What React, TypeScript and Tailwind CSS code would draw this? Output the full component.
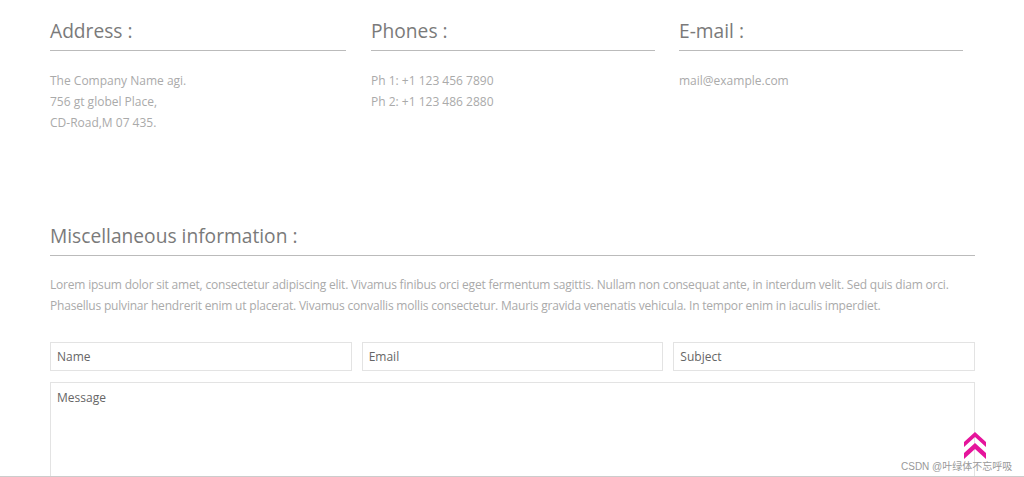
import React from 'react';

const FONT = "font-['Open_Sans','Noto_Sans',sans-serif]";

function Heading({ children }: { children: React.ReactNode }) {
  return (
    <h3 className="text-[19.2px] leading-[28px] text-[#7a7a7a] font-normal pb-[5px] border-b border-[#bbb]">
      {children}
    </h3>
  );
}

export default function App() {
  return (
    <div className={`relative w-[1024px] h-[477px] overflow-hidden bg-white ${FONT}`}>
      <div className="pl-[50px] pt-[17px] w-[975px]">
        <div className="flex">
          <div className="w-[296px]">
            <Heading>Address :</Heading>
            <div className="mt-[19px] text-[12px] leading-[21px] text-[#aaa]">
              <p>The Company Name agi.</p>
              <p>756 gt globel Place,</p>
              <p>CD-Road,M 07 435.</p>
            </div>
          </div>
          <div className="w-[284px] ml-[25px]">
            <Heading>Phones :</Heading>
            <div className="mt-[19px] text-[12px] leading-[21px] text-[#aaa]">
              <p>Ph 1: +1 123 456 7890</p>
              <p>Ph 2: +1 123 486 2880</p>
            </div>
          </div>
          <div className="w-[284px] ml-[24px]">
            <Heading>E-mail :</Heading>
            <div className="mt-[19px] text-[12px] leading-[21px] text-[#aaa]">
              <p>mail@example.com</p>
            </div>
          </div>
        </div>

        <div className="mt-[89px]">
          <Heading>Miscellaneous information :</Heading>
          <p className="mt-[18px] text-[12px] leading-[21px] tracking-[-0.2px] text-[#aaa]">
            Lorem ipsum dolor sit amet, consectetur adipiscing elit. Vivamus finibus orci eget fermentum sagittis. Nullam non consequat ante, in interdum velit. Sed quis diam orci. Phasellus pulvinar hendrerit enim ut placerat. Vivamus convallis mollis consectetur. Mauris gravida venenatis vehicula. In tempor enim in iaculis imperdiet.
          </p>
          <form className="mt-[26px]">
            <div className="flex gap-[10px]">
              {['Name', 'Email', 'Subject'].map(p => (
                <input
                  key={p}
                  placeholder={p}
                  className="flex-1 min-w-0 h-[29px] px-[6px] border border-[#e3e3e3] text-[12px] text-[#555] placeholder:text-[#666] outline-none"
                />
              ))}
            </div>
            <textarea
              placeholder="Message"
              className="mt-[11px] block w-full h-[140px] px-[6px] py-[6px] border border-[#e3e3e3] text-[12px] text-[#555] placeholder:text-[#666] resize-none outline-none"
            />
          </form>
        </div>
      </div>

      <a href="#" className="absolute left-[964px] top-[432px]">
        <svg width="22" height="27" viewBox="0 0 22 27">
          <path d="M11 0 L22 10 L22 15 L11 5 L0 15 L0 10 Z" fill="#e5149b" />
          <path d="M11 11 L22 21 L22 27 L11 17 L0 27 L0 21 Z" fill="#e5149b" />
        </svg>
      </a>
      <span className="absolute left-[901px] top-[460px] text-[10px] leading-[14px] text-[#999] font-['Liberation_Sans','Noto_Sans_CJK_SC',sans-serif]">
        CSDN @叶绿体不忘呼吸
      </span>
      <div className="absolute left-0 right-0 bottom-0 h-px bg-[#ccc]" />
    </div>
  );
}
